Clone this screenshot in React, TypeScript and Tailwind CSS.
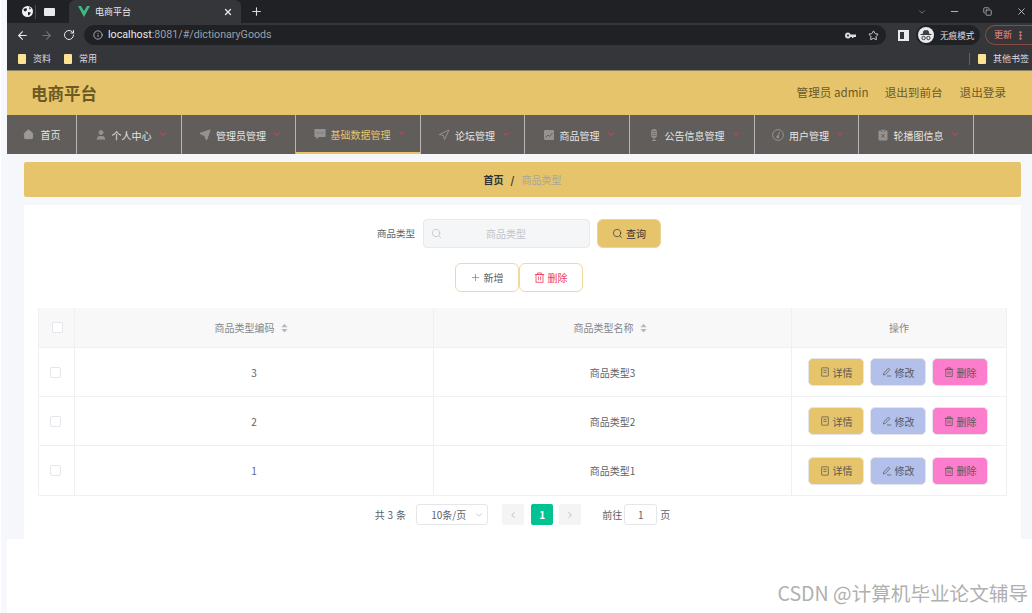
import React from 'react';
import { Search, Plus, ChevronDown, ChevronLeft, ChevronRight, ArrowLeft, ArrowRight, RotateCw, Info, Star, X, Minus, Home, User, Send, Navigation, Copy, EllipsisVertical } from 'lucide-react';

const font = "font-['Noto_Sans_CJK_SC','Noto_Sans',sans-serif]";

type IconProps = { className?: string };

const ChatIcon = ({ className }: IconProps) => (
  <svg viewBox="0 0 12 12" className={className}>
    <path d="M0.5 1 H11.5 V9 H5 L2.5 11.5 V9 H0.5 Z" fill="currentColor" />
    <path d="M3 5 H4 M5.5 5 H6.5 M8 5 H9" stroke="#605d5a" strokeWidth="1.2" />
  </svg>
);

const ChartIcon = ({ className }: IconProps) => (
  <svg viewBox="0 0 12 12" className={className}>
    <rect x="1" y="1" width="10" height="10" rx="1" fill="currentColor" />
    <path d="M2.5 8.5 L5 6 L6.5 7.5 L9.5 4" fill="none" stroke="#605d5a" strokeWidth="1" />
  </svg>
);

const MicIcon = ({ className }: IconProps) => (
  <svg viewBox="0 0 12 12" className={className} fill="none" stroke="currentColor" strokeWidth="1">
    <rect x="3.5" y="0.5" width="5" height="8" rx="2" fill="currentColor" />
    <path d="M3.5 2.5 H8.5 M3.5 4.5 H8.5 M3.5 6.5 H8.5" stroke="#605d5a" strokeWidth="0.6" />
    <path d="M6 9 V11.5 M4 11.5 H8" />
  </svg>
);

const DialIcon = ({ className }: IconProps) => (
  <svg viewBox="0 0 12 12" className={className} fill="none" stroke="currentColor" strokeWidth="1">
    <circle cx="6" cy="6" r="5.4" />
    <path d="M7.5 3 L6 7.5" />
    <circle cx="5.8" cy="8" r="1" fill="currentColor" />
  </svg>
);

const ClipIcon = ({ className }: IconProps) => (
  <svg viewBox="0 0 12 12" className={className}>
    <rect x="1.5" y="1.5" width="9" height="10" rx="1" fill="currentColor" />
    <rect x="4" y="0.5" width="4" height="2" fill="currentColor" stroke="#605d5a" strokeWidth="0.5" />
    <path d="M4.3 5 L7.7 8.6 M7.7 5 L4.3 8.6" stroke="#605d5a" strokeWidth="1" />
  </svg>
);

const navItems = [
  { icon: User, label: '个人中心', w: 'w-[105px]', fill: 'fill-[#95928f]' },
  { icon: Send, label: '管理员管理', w: 'w-[114px]', fill: 'fill-[#95928f]' },
  { icon: ChatIcon, label: '基础数据管理', w: 'w-[125px]', fill: '', active: true },
  { icon: Navigation, label: '论坛管理', w: 'w-[104px]', fill: '' },
  { icon: ChartIcon, label: '商品管理', w: 'w-[105px]', fill: '' },
  { icon: MicIcon, label: '公告信息管理', w: 'w-[125px]', fill: '' },
  { icon: DialIcon, label: '用户管理', w: 'w-[104px]', fill: '' },
  { icon: ClipIcon, label: '轮播图信息', w: 'w-[115px]', fill: '' },
];

const rows = [
  { code: '3', name: '商品类型3' },
  { code: '2', name: '商品类型2' },
  { code: '1', name: '商品类型1' },
];

const SortIcon = () => (
  <svg width="7" height="10" viewBox="0 0 8 11" className="ml-[6px] fill-[#b4b7bd]">
    <path d="M4 0.5 L7.5 4.5 H0.5 Z" />
    <path d="M4 10.5 L7.5 6.5 H0.5 Z" />
  </svg>
);

const DocIcon = ({ className }: IconProps) => (
  <svg viewBox="0 0 10 12" fill="none" stroke="currentColor" strokeWidth="0.9" className={className}>
    <rect x="1" y="1" width="8" height="10" rx="0.5" />
    <path d="M3 4 H7 M3 6.5 H7" />
  </svg>
);

const EditIcon = ({ className }: IconProps) => (
  <svg viewBox="0 0 12 12" fill="none" stroke="currentColor" strokeWidth="0.9" className={className}>
    <path d="M2 7.5 L7.5 1.5 L9.5 3 L4 9 L1.8 9.6 Z" />
    <path d="M6 10.8 H11" />
  </svg>
);

const BinIcon = ({ className }: IconProps) => (
  <svg viewBox="0 0 12 12" fill="none" stroke="currentColor" strokeWidth="0.9" className={className}>
    <path d="M1 2.8 H11 M4 2.8 V1 H8 V2.8" />
    <rect x="2.2" y="2.8" width="7.6" height="8.4" />
    <path d="M4.8 5 V9 M7.2 5 V9" />
  </svg>
);

const Folder = () => <div className="w-[8px] h-[10px] bg-[#fde293] rounded-[1px]" />;

const BrowserChrome = () => (
  <div className="text-[#e8eaed]">
    {/* Tabs */}
    <div className="h-[23px] bg-[#202124] flex items-end">
      <div className="h-[23px] w-[62px] flex items-center pl-[15px]">
        <svg width="11" height="11" viewBox="0 0 11 11">
          <circle cx="5.5" cy="5.5" r="5.5" fill="#f1f3f4" />
          <path d="M1.5 3 L4.5 2 L5 4 L3.5 5.5 L2 5 Z M6 6 L9 6.5 L7 9.5 L6 9 Z M7 1 L9 2.5 L7.5 3.5 Z" fill="#202124" />
        </svg>
        <div className="ml-[2px] w-px h-[14px] bg-[#4a4b4e] mr-[8px]" />
        <div className="w-[11px] h-[8px] bg-[#e8eaed] rounded-[1px]" />
      </div>
      <div className="h-[23px] w-[172px] bg-[#35363a] rounded-t-md flex items-center pl-[9px] pr-[8px]">
        <svg width="12" height="11" viewBox="0 0 12 11"><path d="M0 0 H3 L6 5 L9 0 H12 L6 11 Z" fill="#41b883" /></svg>
        <span className="ml-[5px] text-[9px] text-[#e8eaed]">电商平台</span>
        <X className="ml-auto w-[10px] h-[10px]" strokeWidth={3} />
      </div>
      <Plus className="ml-[9px] mb-[5px] w-[13px] h-[13px] text-[#dadce0]" strokeWidth={2} />
      <div className="ml-auto h-[23px] flex items-center pr-[5px] text-[#bdc1c6]">
        <ChevronDown className="w-[10px] h-[10px] mr-[22px] text-[#80868b]" />
        <Minus className="w-[11px] h-[11px] mr-[23px]" />
        <Copy className="w-[9px] h-[9px] mr-[24px]" />
        <X className="w-[11px] h-[11px]" />
      </div>
    </div>
    {/* Toolbar */}
    <div className="h-[24px] bg-[#35363a] flex items-center pl-[9px]">
      <ArrowLeft className="w-[13px] h-[13px]" />
      <ArrowRight className="ml-[11px] w-[13px] h-[13px] text-[#6f7174]" />
      <RotateCw className="ml-[10px] w-[12px] h-[12px]" />
      <div className="ml-[9px] h-[20px] w-[802px] bg-[#202124] rounded-full flex items-center pl-[9px] pr-[7px]">
        <Info className="w-[10px] h-[10px] text-[#bdc1c6]" />
        <span className="ml-[5px] text-[10.7px] font-['Roboto',sans-serif] text-[#e8eaed]">localhost<span className="text-[#9aa0a6]">:8081/#/dictionaryGoods</span></span>
        <svg width="11" height="7" viewBox="0 0 11 7" className="ml-auto fill-[#dadce0]">
          <path d="M3 0.5 A3 3 0 1 0 3 6.5 A3 3 0 0 0 5.6 5 H7 V6 H8.5 V5 H11 V2.5 H5.6 A3 3 0 0 0 3 0.5 Z M3 2.5 A1 1 0 1 1 3 4.5 A1 1 0 0 1 3 2.5 Z" fillRule="evenodd" />
        </svg>
        <Star className="ml-[12px] w-[11px] h-[11px] text-[#dadce0]" />
      </div>
      <div className="ml-[12px] w-[11px] h-[11px] border-[2px] border-r-[5px] border-[#e8eaed]" />
      <div className="ml-[7px] h-[20px] w-[64px] bg-[#202124] rounded-full flex items-center">
        <div className="w-[16px] h-[16px] rounded-full bg-[#e8eaed] flex items-center justify-center ml-[2px]">
          <svg width="12" height="11" viewBox="0 0 12 11" fill="none" stroke="#3c4043" strokeWidth="1">
            <path d="M3 4 L4 0.8 H8 L9 4 Z" fill="#3c4043" />
            <path d="M0.5 4.5 H11.5" />
            <circle cx="3.6" cy="8" r="1.7" />
            <circle cx="8.4" cy="8" r="1.7" />
          </svg>
        </div>
        <span className="ml-[6px] text-[8.6px] text-[#dadce0]">无痕模式</span>
      </div>
      <div className="ml-[5px] h-[20px] flex-1 rounded-l-full border border-r-0 border-[#8c4a44] flex items-center pl-[8px] text-[9px] text-[#f28b82]">
        更新
        <EllipsisVertical className="ml-[3px] w-[11px] h-[11px]" strokeWidth={3} />
      </div>
    </div>
    {/* Bookmarks */}
    <div className="h-[24px] bg-[#35363a] flex items-center pl-[11px] text-[9px] text-[#dadce0] border-b border-[#8a8366]">
      <Folder />
      <span className="ml-[7px]">资料</span>
      <div className="ml-[13px]"><Folder /></div>
      <span className="ml-[7px]">常用</span>
      <div className="ml-auto w-px h-[12px] bg-[#5f6368]" />
      <div className="ml-[8px]"><Folder /></div>
      <span className="ml-[7px] mr-[3px]">其他书签</span>
    </div>
  </div>
);

const Header = () => (
  <div className="h-[44px] bg-[#e6c46c] flex items-center pl-[24px] pr-[26px] text-[#6b5a2a]">
    <span className="text-[16.5px] font-bold text-[#6c5a22]">电商平台</span>
    <span className="ml-auto text-[11.6px]">管理员 admin</span>
    <span className="ml-[16px] text-[11.6px]">退出到前台</span>
    <span className="ml-[17px] text-[11.6px]">退出登录</span>
  </div>
);

const NavBar = () => (
  <div className="h-[39px] bg-[#605d5a] flex text-[10px] text-[#e6e6e6]">
    <div className="w-[70px] flex items-center justify-center border-r border-[#b5b5b5]">
      <Home className="w-[11px] h-[11px] text-[#9a9a9a] fill-[#9a9a9a]" />
      <span className="ml-[7px]">首页</span>
    </div>
    {navItems.map((item) => (
      <div key={item.label} className={`${item.w} pl-[4px] flex items-center justify-center border-r border-[#b5b5b5] ${item.active ? 'text-[#e6c46c] border-b-2 border-b-[#e6c46c]' : ''}`}>
        <item.icon className={`w-[12px] h-[12px] text-[#95928f] ${item.fill}`} />
        <span className="ml-[5px] mt-[2px]">{item.label}</span>
        <ChevronDown className="ml-[6px] -mt-[2px] w-[10px] h-[10px] text-[#c2407f]" strokeWidth={2.5} />
      </div>
    ))}
  </div>
);

const Toolbar = () => (
  <div className="bg-white pt-[14px] flex flex-col items-center">
    <div className="flex items-center h-[29px] -ml-[7px]">
      <span className="text-[9.5px] text-[#606266]">商品类型</span>
      <div className="ml-[8px] w-[167px] h-[29px] bg-[#f5f6f8] border border-[#e8e9ec] rounded-[4px] flex items-center pl-[7px]">
        <Search className="w-[11px] h-[11px] text-[#b9bcc2]" strokeWidth={1.5} />
        <span className="ml-[44px] text-[10px] text-[#c0c4cc]">商品类型</span>
      </div>
      <div className="ml-[7px] w-[64px] h-[29px] bg-[#e6c46c] border border-[#e9d598] rounded-[6px] flex items-center justify-center text-[10px] text-[#333]">
        <Search className="w-[11px] h-[11px]" strokeWidth={1.5} />
        <span className="ml-[3px]">查询</span>
      </div>
    </div>
    <div className="flex mt-[15px] h-[29px] -ml-[8px]">
      <div className="w-[64px] h-[29px] bg-white border border-[#efd99e] rounded-[6px] flex items-center justify-center text-[10px] text-[#606266]">
        <Plus className="w-[11px] h-[11px] text-[#8a7a50]" strokeWidth={1.5} />
        <span className="ml-[3px]">新增</span>
      </div>
      <div className="w-[64px] h-[29px] bg-white border border-[#efd99e] rounded-[6px] flex items-center justify-center text-[10px] text-[#f0405f]">
        <BinIcon className="w-[11px] h-[11px]" />
        <span className="ml-[3px]">删除</span>
      </div>
    </div>
  </div>
);

const ActionButton = ({ bg, icon: Icon, label }: { bg: string; icon: typeof DocIcon; label: string }) => (
  <div className={`w-[56px] h-[28px] ${bg} border border-[#e4e5e8] rounded-[5px] flex items-center justify-center text-[10px] text-[#5a5a55]`}>
    <Icon className="w-[10px] h-[10px]" />
    <span className="ml-[3px]">{label}</span>
  </div>
);

const Checkbox = () => <div className="w-[11px] h-[11px] bg-white border border-[#e4e6ea] rounded-[2px]" />;

const GoodsTable = () => (
  <div className="mt-[16px] mx-[14px] border border-[#eef0f4] border-t-0 text-[10px] text-[#606266]">
    <div className="h-[40px] bg-[#f8f8f9] flex border-b border-[#eef0f4]">
      <div className="w-[36px] pl-[1px] flex items-center justify-center border-r border-[#eef0f4]">
        <Checkbox />
      </div>
      <div className="w-[359px] pr-[6px] flex items-center justify-center border-r border-[#eef0f4] text-[#85878b]">
        商品类型编码<SortIcon />
      </div>
      <div className="w-[358px] pr-[5px] flex items-center justify-center border-r border-[#eef0f4] text-[#85878b]">
        商品类型名称<SortIcon />
      </div>
      <div className="flex-1 flex items-center justify-center text-[#85878b]">操作</div>
    </div>
    {rows.map((row, i) => (
      <div key={row.code} className={`h-[49px] flex bg-white ${i < 2 ? 'border-b border-[#eef0f4]' : ''}`}>
        <div className="w-[36px] pr-[2px] flex items-center justify-center border-r border-[#eef0f4]">
          <Checkbox />
        </div>
        <div className={`w-[359px] flex items-center justify-center border-r border-[#eef0f4] ${row.code === '1' ? 'text-[#5a6a95]' : ''}`}>{row.code}</div>
        <div className="w-[358px] flex items-center justify-center border-r border-[#eef0f4]">{row.name}</div>
        <div className="flex-1 flex items-center justify-center gap-[6px] pr-[2px]">
          <ActionButton bg="bg-[#e6c46c]" icon={DocIcon} label="详情" />
          <ActionButton bg="bg-[#b3c0ea]" icon={EditIcon} label="修改" />
          <ActionButton bg="bg-[#fb7dcb]" icon={BinIcon} label="删除" />
        </div>
      </div>
    ))}
  </div>
);

const Pagination = () => (
  <div className="h-[43px] pt-[8px] flex justify-center text-[10px] text-[#606266]">
    <div className="h-[21px] flex items-center">
      <span className="tracking-[0.3px]">共 3 条</span>
      <div className="ml-[10px] w-[72px] h-[21px] border border-[#e4e6ea] rounded-[3px] flex items-center pl-[14px]">
        10条/页
        <ChevronDown className="ml-auto mr-[3px] w-[10px] h-[10px] text-[#c0c4cc]" />
      </div>
      <div className="ml-[14px] w-[22px] h-[21px] bg-[#f4f4f5] rounded-[2px] flex items-center justify-center">
        <ChevronLeft className="w-[10px] h-[10px] text-[#b0b3b8]" />
      </div>
      <div className="ml-[7px] w-[22px] h-[21px] bg-[#00c292] rounded-[2px] flex items-center justify-center text-white font-bold">1</div>
      <div className="ml-[6px] w-[22px] h-[21px] bg-[#f4f4f5] rounded-[2px] flex items-center justify-center">
        <ChevronRight className="w-[10px] h-[10px] text-[#b0b3b8]" />
      </div>
      <span className="ml-[21px]">前往</span>
      <div className="ml-[2px] w-[33px] h-[21px] border border-[#e4e6ea] rounded-[3px] flex items-center justify-center">1</div>
      <span className="ml-[3px]">页</span>
    </div>
  </div>
);

export default function App() {
  return (
    <div className={`relative w-[1032px] h-[613px] overflow-hidden bg-white flex ${font}`}>
      <div className="ml-px w-[6px] bg-[#f7f8fb]" />
      <div className="flex-1 flex flex-col">
        <BrowserChrome />
        <Header />
        <NavBar />
        <div className="bg-[#f5f7fa] pl-[17px] pt-[8px] h-[385px] pr-[11px]">
          <div className="h-[35px] bg-[#e6c46c] rounded-[2px] flex items-center justify-center text-[10px] font-bold text-[#303133]">
            首页
            <span className="mx-[7px]">/</span>
            <span className="font-normal text-[#a9a692]">商品类型</span>
          </div>
          <div className="mt-[8px] bg-white">
            <Toolbar />
            <GoodsTable />
            <Pagination />
          </div>
        </div>
      </div>
      <span className="absolute right-[4px] bottom-[10px] leading-none text-[19.6px] text-[#b0b0b0]">CSDN @计算机毕业论文辅导</span>
    </div>
  );
}
